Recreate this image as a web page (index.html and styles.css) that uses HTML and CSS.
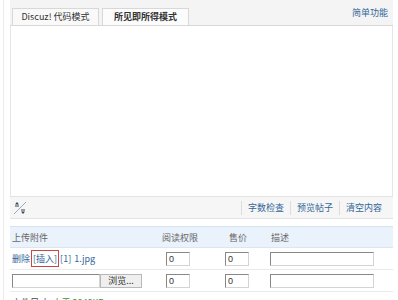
FILE: index.html
```html
<!DOCTYPE html>
<html lang="zh">
<head>
  <meta charset="UTF-8">
  <title>编辑器</title>
  <link rel="stylesheet" href="styles.css">
</head>
<body>

<div class="page">
  <div class="side"></div>
  <div class="main">
    <div class="tool-top"></div>
    <div class="tabbar">
      <div class="tab">Discuz! 代码模式</div>
      <div class="tab active">所见即所得模式</div>
      <a class="simple-link">简单功能</a>
    </div>

    <div class="editor-body"></div>

    <div class="edbar">
      <svg class="resize" width="14" height="14" viewBox="0 0 14 14">
        <line x1="1" y1="13" x2="13" y2="1" stroke="#9aa8b8" stroke-width="1"/>
        <path d="M4 1 L6 3.5 L2 3.5 Z" fill="#345"/>
        <line x1="2" y1="5" x2="6" y2="5" stroke="#345"/>
        <line x1="8" y1="9" x2="12" y2="9" stroke="#345"/>
        <path d="M8 10.5 L12 10.5 L10 13 Z" fill="#345"/>
      </svg>
      <div class="ed-btns">
        <a>字数检查</a>
        <a>预览帖子</a>
        <a>清空内容</a>
      </div>
    </div>

    <div class="upload">
      <div class="urow head">
        <div class="c1">上传附件</div>
        <div class="c2">阅读权限</div>
        <div class="c3">售价</div>
        <div class="c4">描述</div>
      </div>
      <div class="urow">
        <div class="c1"><a class="lnk">删除</a><a class="lnk insert">[插入]</a><span class="num">[1]</span><a class="lnk">1.jpg</a></div>
        <div class="c2"><input class="small-in" value="0"></div>
        <div class="c3"><input class="small-in" value="0"></div>
        <div class="c4"><input class="desc-in"></div>
      </div>
      <div class="urow">
        <div class="c1"><span class="file-box"></span><span class="browse">浏览...</span></div>
        <div class="c2"><input class="small-in" value="0"></div>
        <div class="c3"><input class="small-in" value="0"></div>
        <div class="c4"><input class="desc-in"></div>
      </div>
      <p class="limit">文件尺寸: <span class="green">小于 2048KB</span></p>
    </div>
  </div>
</div>

</body>
</html>
```

FILE: styles.css
```css
body {
  margin: 0;
  font-family: "Noto Sans CJK SC", "Liberation Sans", sans-serif;
  font-size: 9px;
  color: #333;
  background-color: #fff;
}
a {
  color: #369;
  text-decoration: none;
}
.page {
  display: flex;
}
.side {
  width: 3px;
  height: 300px;
  border-right: 1px solid #ececec;
  margin-right: 6px;
}
.main {
  width: 383px;
}
.tool-top {
  height: 8px;
  background-color: #f4f4f4;
}
.tabbar {
  display: flex;
  align-items: flex-end;
  height: 17px;
  padding-left: 2px;
  background-color: #f4f4f4;
  border-bottom: 1px solid #d8d8d8;
}
.tab {
  box-sizing: border-box;
  width: 87px;
  height: 17px;
  line-height: 16px;
  margin-right: 3px;
  text-align: center;
  background-color: #f9f9f9;
  border: 1px solid #d8d8d8;
  border-bottom: none;
}
.tab.active {
  font-weight: bold;
  background-color: #fcfcfc;
}
.simple-link {
  margin-left: auto;
  align-self: flex-start;
  line-height: 9px;
  padding-right: 5px;
}
.editor-body {
  height: 170px;
  background-color: #fff;
  border-left: 1px solid #e6e6e6;
  border-right: 1px solid #e6e6e6;
}
.edbar {
  display: flex;
  align-items: center;
  height: 21px;
  background-color: #f6f6f6;
  border-top: 1px solid #e3e3e3;
  border-bottom: 1px solid #e3e3e3;
}
.resize {
  margin-left: 3px;
}
.ed-btns {
  display: flex;
  margin-left: auto;
  margin-right: 5px;
}
.ed-btns a {
  padding: 0 6px;
  line-height: 14px;
  border-left: 1px solid #dcdcdc;
}
.upload {
  margin-top: 7px;
}
.urow {
  display: grid;
  grid-template-columns: 150px 60px 45px 1fr;
  align-items: center;
  height: 21px;
  border-bottom: 1px solid #eaeaea;
}
.urow.head {
  height: 20px;
  color: #666;
  background-color: #eaf2fb;
  border-top: 1px solid #d6e4f2;
  border-bottom: 1px solid #dde6ef;
}
.urow .c1 {
  display: flex;
  align-items: center;
  padding-left: 2px;
}
.head .c2 {
  padding-left: 2px;
}
.head .c3 {
  padding-left: 9px;
}
.head .c4 {
  padding-left: 6px;
}
.insert {
  padding: 1px 1px;
  border: 1px solid #c44;
  margin: 0 0 0 1px;
}
.num {
  margin: 0 3px 0 1px;
  color: #369;
}
.small-in, .desc-in {
  box-sizing: border-box;
  height: 14px;
  padding: 0 2px;
  font-family: "Liberation Sans", sans-serif;
  font-size: 9px;
  color: #333;
  border: 1px solid #d4d4d4;
  border-top-color: #888;
  border-left-color: #888;
}
.small-in {
  width: 24px;
  margin-left: 6px;
}
.c3 .small-in {
  margin-left: 5px;
}
.desc-in {
  width: 104px;
  margin-left: 5px;
}
.file-box {
  box-sizing: border-box;
  width: 88px;
  height: 14px;
  border: 1px solid #d4d4d4;
  border-top-color: #888;
  border-left-color: #888;
}
.browse {
  box-sizing: border-box;
  width: 42px;
  height: 14px;
  line-height: 12px;
  text-align: center;
  background-color: #efefef;
  border: 1px solid #b8b8b8;
}
.limit {
  margin: 4px 0 0 2px;
  color: #444;
}
.green {
  color: #393;
}
```
